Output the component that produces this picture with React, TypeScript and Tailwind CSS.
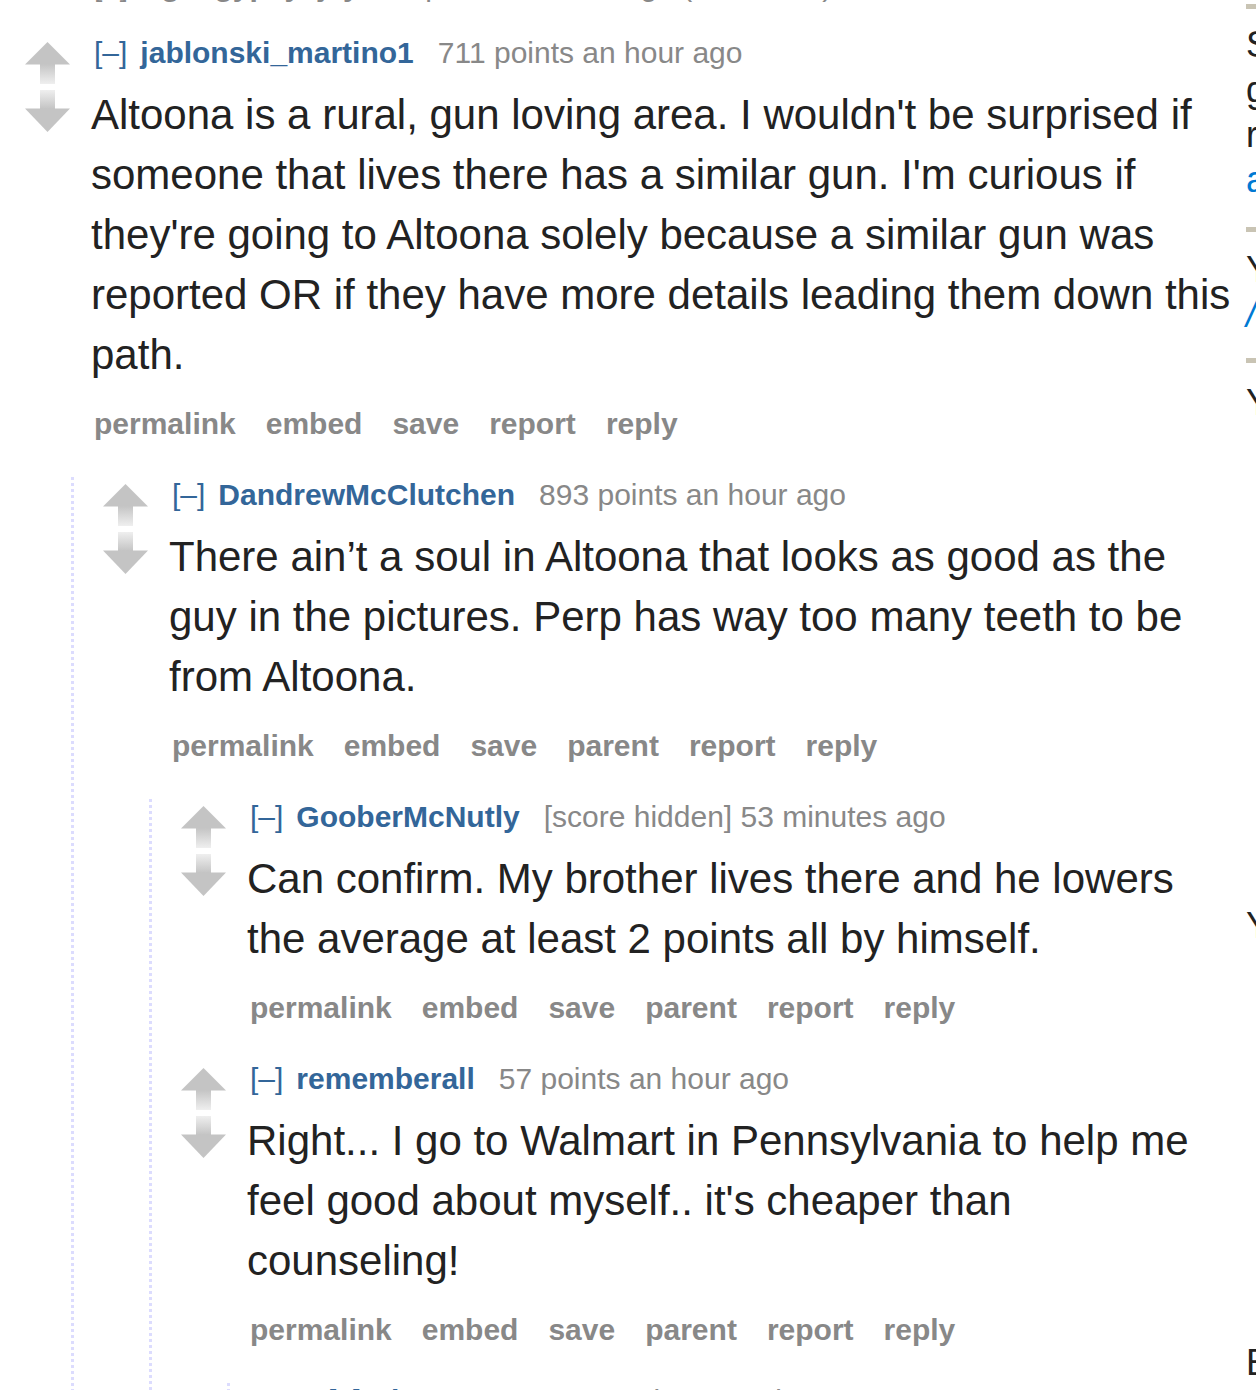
import React from "react";

type CommentData = {
  user: string;
  meta: string;
  body: string;
  parent?: boolean;
  replies?: CommentData[];
};

const thread: CommentData = {
  user: "jablonski_martino1",
  meta: "711 points an hour ago",
  body:
    "Altoona is a rural, gun loving area. I wouldn't be surprised if someone that lives there has a similar gun. I'm curious if they're going to Altoona solely because a similar gun was reported OR if they have more details leading them down this path.",
  replies: [
    {
      user: "DandrewMcClutchen",
      meta: "893 points an hour ago",
      parent: true,
      body: "There ain\u2019t a soul in Altoona that looks as good as the guy in the pictures. Perp has way too many teeth to be from Altoona.",
      replies: [
        {
          user: "GooberMcNutly",
          meta: "[score hidden] 53 minutes ago",
          parent: true,
          body: "Can confirm. My brother lives there and he lowers the average at least 2 points all by himself.",
        },
        {
          user: "rememberall",
          meta: "57 points an hour ago",
          parent: true,
          body: "Right... I go to Walmart in Pennsylvania to help me feel good about myself.. it's cheaper than counseling!",
          replies: [
            {
              user: "yinzer_steve",
              meta: "21 points 40 minutes ago",
              parent: true,
              body: "Ha, same for the Sheetz.",
            },
          ],
        },
      ],
    },
  ],
};

const Arrows = () => (
  <svg width="45" height="90" viewBox="0 0 45 90">
    <defs>
      <linearGradient id="upStem" x1="0" y1="0" x2="0" y2="1">
        <stop offset="0" stopColor="#c4c4c4" />
        <stop offset="1" stopColor="#efefef" />
      </linearGradient>
      <linearGradient id="downStem" x1="0" y1="0" x2="0" y2="1">
        <stop offset="0" stopColor="#efefef" />
        <stop offset="1" stopColor="#c4c4c4" />
      </linearGradient>
    </defs>
    <polygon points="22.5,0 45,22.5 0,22.5" fill="#c4c4c4" />
    <rect x="15" y="22" width="15" height="20" fill="url(#upStem)" />
    <rect x="15" y="48" width="15" height="19" fill="url(#downStem)" />
    <polygon points="0,66.5 45,66.5 22.5,90" fill="#c4c4c4" />
  </svg>
);

const Comment = ({ c }: { c: CommentData }) => {
  const buttons = c.parent
    ? ["permalink", "embed", "save", "parent", "report", "reply"]
    : ["permalink", "embed", "save", "report", "reply"];

  return (
    <div>
      <div className="flex pb-[35px]">
        <div className="ml-[25px] mt-[7px] w-[45px] shrink-0">
          <Arrows />
        </div>
        <div className="ml-[21px] min-w-0 flex-1">
          {/* tagline */}
          <div className="flex items-baseline whitespace-nowrap pl-[3px] text-[30px] leading-[36px]">
            <span className="text-[#369]">[–]</span>
            <span className="ml-[13px] font-bold text-[#369]">{c.user}</span>
            <span className="ml-[24px] text-[#888]">{c.meta}</span>
          </div>
          <div className="mt-[14px] text-[42px] leading-[60px] text-[#222]">{c.body}</div>
          <div className="mt-[21px] flex gap-[30px] whitespace-nowrap pl-[3px] text-[30px] font-bold leading-[36px] text-[#888]">
            {buttons.map((b) => (
              <span key={b}>{b}</span>
            ))}
          </div>
        </div>
      </div>
      {c.replies && (
        <div className="ml-[71px] flex">
          <div className="w-[3px] shrink-0 bg-[image:repeating-linear-gradient(to_bottom,#dcdcfe_0px,#dcdcfe_3px,transparent_3px,transparent_6px)]" />
          <div className="min-w-0 flex-1 pl-[4px]">
            {c.replies.map((r) => (
              <Comment key={r.user} c={r} />
            ))}
          </div>
        </div>
      )}
    </div>
  );
};

const Bar = () => <div className="h-[5px] bg-[#c9c4b4]" />;

const Sidebar = () => (
  <div className="ml-[14px] w-[320px] shrink-0 whitespace-nowrap pt-[4px] text-[36px] leading-[45px] text-[#222]">
    <Bar />
    <div className="pb-[25px] pt-[13px]">
      <div>Surveillance photos of the</div>
      <div>gunman were released by</div>
      <div>regional police on Monday</div>
      <div className="text-[#0079d3]">altoonamirror.com</div>
    </div>
    <Bar />
    <div className="pb-[21px] pt-[15px]">
      <div>You might also like</div>
      <div className="italic text-[#0079d3]">/r/pittsburgh</div>
    </div>
    <Bar />
    <div className="pt-[17px]">
      <div>Yesterday's top posts</div>
      <div className="mt-[478px]">Yinzers react to the news</div>
      <div className="mt-[392px]">Events this weekend</div>
    </div>
  </div>
);

export default function App() {
  return (
    <div className="flex h-[1390px] w-[1256px] overflow-hidden bg-white font-['Liberation_Sans',Arial,sans-serif]">
      <div className="w-[1232px] shrink-0">
        {/* collapsed comment above, mostly scrolled out of view */}
        <div className="mb-[31px] ml-[94px] mt-[-32px] flex items-baseline whitespace-nowrap text-[30px] leading-[36px] text-[#888]">
          <span>[+]</span>
          <span className="ml-[13px] font-bold">Pgh_gypsy_jay</span>
          <span className="ml-[24px]">42 points an hour ago (3 children)</span>
        </div>
        <Comment c={thread} />
      </div>
      <Sidebar />
    </div>
  );
}
